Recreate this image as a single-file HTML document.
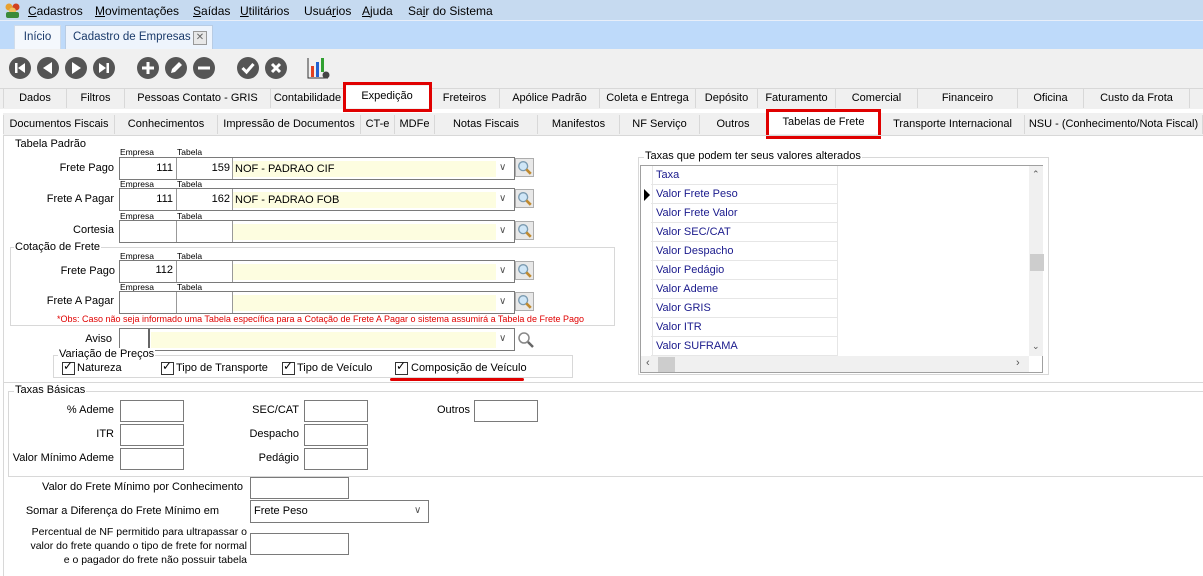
<!DOCTYPE html>
<html><head><meta charset="utf-8"><style>
*{box-sizing:border-box;margin:0;padding:0}
body{width:1203px;height:576px;overflow:hidden;background:#fff;font-family:"Liberation Sans",sans-serif;font-size:11px;color:#000;position:relative}
.a{position:absolute}
.menu{left:0;top:0;width:1203px;height:21px;background:#c6daf0;border-bottom:1px solid #e8eef8}
.menu span{position:absolute;top:4px;font-size:12px}
.strip{left:0;top:21px;width:1203px;height:28px;background:#bedafa}
.tb{left:0;top:49px;width:1203px;height:39px;background:#f0f0f0}
.tabs1{left:0;top:88px;width:1203px;height:21px;background:#f0f0f0;border-top:1px solid #d8d8d8}
.t{position:absolute;height:19px;border-right:1px solid #d8d8d8;text-align:center;line-height:19px;font-size:11px;background:#f0f0f0;white-space:nowrap}
.tabs2{left:3px;top:113px;width:1200px;height:22px;background:#f0f0f0}
.circ{position:absolute;top:8px;width:22px;height:22px;border-radius:50%;background:#555}
.circ svg{position:absolute;left:0;top:0}
.lbl{position:absolute;text-align:right;font-size:11px}
.sm{position:absolute;font-size:8.5px;line-height:9px}
.box{position:absolute;border:1px solid #7a7a7a;background:#fff}
.yl{position:absolute;background:#fdfde0}
.grp{position:absolute;border:1px solid #d8d8d8}
.gt{position:absolute;background:#fff;font-size:11px;padding:0 1px}
.mag{position:absolute;width:19px;height:19px;border:1px solid #adadad;background:#e8e8e8}
.chk{position:absolute;width:13px;height:13px;border:1px solid #333;background:#fff}
.row{position:absolute;left:651px;width:187px;height:19px;border-bottom:1px solid #e6e6e6;border-right:1px solid #e6e6e6;color:#1a1a8c;font-size:11px;line-height:19px;padding-left:5px}
.dd{position:absolute;font-size:10px;color:#555}
</style></head><body>
<svg width="0" height="0" style="position:absolute"><defs><symbol id="mg" viewBox="0 0 19 19"><circle cx="8" cy="8" r="5" fill="#cfe6f7" stroke="#7a9ab0" stroke-width="1.5"/><path d="M11.5 11.5l5 5" stroke="#c08a30" stroke-width="3"/></symbol></defs></svg>
<div class="a menu">
<svg class="a" style="left:4px;top:2px" width="17" height="17"><circle cx="5" cy="5" r="3.5" fill="#e8a030"/><circle cx="12" cy="5" r="3.5" fill="#d04020"/><circle cx="8.5" cy="9" r="3.5" fill="#f0c060"/><rect x="2" y="10" width="13" height="6" rx="2" fill="#3a8a3a"/></svg>
<span style="left:28px"><u>C</u>adastros</span><span style="left:95px"><u>M</u>ovimentações</span><span style="left:193px"><u>S</u>aídas</span><span style="left:240px"><u>U</u>tilitários</span><span style="left:304px">Usuá<u>r</u>ios</span><span style="left:362px"><u>A</u>juda</span><span style="left:408px">Sa<u>i</u>r do Sistema</span>
</div>
<div class="a strip">
<div class="a" style="left:14px;top:4px;width:47px;height:24px;background:#f4f8fd;border:1px solid #d0dcea;border-bottom:none;font-size:11.5px;line-height:22px;text-align:center;color:#1a3a6a">Início</div>
<div class="a" style="left:65px;top:4px;width:148px;height:24px;background:#eef4fc;border:1px solid #b8cce4;border-bottom:none;font-size:11.5px;line-height:22px;padding-left:7px;color:#1a3a6a">Cadastro de Empresas</div>
<div class="a" style="left:193px;top:10px;width:14px;height:14px;border:1px solid #999;background:#e8e8e8;font-size:10px;line-height:12px;text-align:center;color:#666">✕</div>
</div>
<div class="a tb">
<div class="circ" style="left:9px"><svg width="22" height="22"><rect x="6" y="6" width="2.5" height="10" fill="#fff"/><path d="M16 6v10l-7-5z" fill="#fff"/></svg></div>
<div class="circ" style="left:37px"><svg width="22" height="22"><path d="M15 5v12l-9-6z" fill="#fff"/></svg></div>
<div class="circ" style="left:65px"><svg width="22" height="22"><path d="M7 5v12l9-6z" fill="#fff"/></svg></div>
<div class="circ" style="left:93px"><svg width="22" height="22"><path d="M6 6v10l7-5z" fill="#fff"/><rect x="13.5" y="6" width="2.5" height="10" fill="#fff"/></svg></div>
<div class="circ" style="left:137px"><svg width="22" height="22"><rect x="5" y="9.5" width="12" height="3" fill="#fff"/><rect x="9.5" y="5" width="3" height="12" fill="#fff"/></svg></div>
<div class="circ" style="left:165px"><svg width="22" height="22"><path d="M6 16l1-4 7-7 3 3-7 7z" fill="#fff"/></svg></div>
<div class="circ" style="left:193px"><svg width="22" height="22"><rect x="5" y="9.5" width="12" height="3" fill="#fff"/></svg></div>
<div class="circ" style="left:237px"><svg width="22" height="22"><path d="M5.5 11l4 4 7-8" stroke="#fff" stroke-width="3" fill="none"/></svg></div>
<div class="circ" style="left:265px"><svg width="22" height="22"><path d="M7 7l8 8M15 7l-8 8" stroke="#fff" stroke-width="3"/></svg></div>
<svg class="a" style="left:307px;top:7px" width="24" height="24"><path d="M1 2v20h20" stroke="#333" fill="none"/><rect x="4" y="10" width="3" height="11" fill="#e04020"/><rect x="9" y="6" width="3" height="15" fill="#2060d0"/><rect x="14" y="2" width="3" height="14" fill="#30a030"/><circle cx="19" cy="19" r="3.5" fill="#444"/></svg>
</div>
<div class="a tabs1">
<div class="t" style="left:3px;width:64px;border-left:1px solid #d8d8d8">Dados</div>
<div class="t" style="left:67px;width:58px">Filtros</div>
<div class="t" style="left:125px;width:146px">Pessoas Contato - GRIS</div>
<div class="t" style="left:271px;width:74px">Contabilidade</div>
<div class="t" style="left:345px;width:85px;background:#fff;top:-3px;height:22px;line-height:20px">Expedição</div>
<div class="t" style="left:430px;width:70px">Freteiros</div>
<div class="t" style="left:500px;width:100px">Apólice Padrão</div>
<div class="t" style="left:600px;width:96px">Coleta e Entrega</div>
<div class="t" style="left:696px;width:62px">Depósito</div>
<div class="t" style="left:758px;width:78px">Faturamento</div>
<div class="t" style="left:836px;width:82px">Comercial</div>
<div class="t" style="left:918px;width:100px">Financeiro</div>
<div class="t" style="left:1018px;width:66px">Oficina</div>
<div class="t" style="left:1084px;width:106px">Custo da Frota</div>
</div>
<div class="a" style="left:343px;top:82px;width:89px;height:30px;border:3px solid #e00000"></div>
<div class="a tabs2">
<div class="t" style="left:0;width:112px;top:2px;border-left:1px solid #d8d8d8">Documentos Fiscais</div>
<div class="t" style="left:112px;width:103px;top:2px">Conhecimentos</div>
<div class="t" style="left:215px;width:143px;top:2px">Impressão de Documentos</div>
<div class="t" style="left:358px;width:34px;top:2px">CT-e</div>
<div class="t" style="left:392px;width:40px;top:2px">MDFe</div>
<div class="t" style="left:432px;width:103px;top:2px">Notas Fiscais</div>
<div class="t" style="left:535px;width:82px;top:2px">Manifestos</div>
<div class="t" style="left:617px;width:80px;top:2px">NF Serviço</div>
<div class="t" style="left:697px;width:67px;top:2px">Outros</div>
<div class="t" style="left:764px;width:114px;top:-1px;height:22px;background:#fff;line-height:20px">Tabelas de Frete</div>
<div class="t" style="left:878px;width:144px;top:2px">Transporte Internacional</div>
<div class="t" style="left:1022px;width:178px;top:2px">NSU - (Conhecimento/Nota Fiscal)</div>
</div>
<div class="a" style="left:766px;top:109px;width:115px;height:30px;border:3px solid #e00000"></div>
<div class="a" style="left:3px;top:135px;width:1200px;height:1px;background:#d8d8d8"></div>
<div class="a" style="left:3px;top:135px;width:1px;height:441px;background:#d8d8d8"></div>

<div class="gt" style="left:14px;top:138px">Tabela Padrão</div>
<div class="sm" style="left:120px;top:148px">Empresa</div><div class="sm" style="left:177px;top:148px">Tabela</div>
<div class="lbl" style="left:20px;width:94px;top:162px">Frete Pago</div>
<div class="box" style="left:119px;top:157px;width:396px;height:23px"></div>
<div class="a" style="left:176px;top:158px;width:1px;height:21px;background:#999"></div><div class="a" style="left:232px;top:158px;width:1px;height:21px;background:#999"></div>
<div class="a" style="left:120px;top:162px;width:53px;text-align:right">111</div><div class="a" style="left:177px;top:162px;width:53px;text-align:right">159</div>
<div class="yl" style="left:233px;top:161px;width:263px;height:16px;padding-left:2px;line-height:16px">NOF - PADRAO CIF</div>
<div class="dd" style="left:499px;top:162px">∨</div>
<svg class="mag" style="left:515px;top:158px"><use href="#mg"/></svg>

<div class="sm" style="left:120px;top:180px">Empresa</div><div class="sm" style="left:177px;top:180px">Tabela</div>
<div class="lbl" style="left:20px;width:94px;top:193px">Frete A Pagar</div>
<div class="box" style="left:119px;top:188px;width:396px;height:23px"></div>
<div class="a" style="left:176px;top:189px;width:1px;height:21px;background:#999"></div><div class="a" style="left:232px;top:189px;width:1px;height:21px;background:#999"></div>
<div class="a" style="left:120px;top:193px;width:53px;text-align:right">111</div><div class="a" style="left:177px;top:193px;width:53px;text-align:right">162</div>
<div class="yl" style="left:233px;top:192px;width:263px;height:16px;padding-left:2px;line-height:16px">NOF - PADRAO FOB</div>
<div class="dd" style="left:499px;top:193px">∨</div>
<svg class="mag" style="left:515px;top:189px"><use href="#mg"/></svg>

<div class="sm" style="left:120px;top:212px">Empresa</div><div class="sm" style="left:177px;top:212px">Tabela</div>
<div class="lbl" style="left:20px;width:94px;top:224px">Cortesia</div>
<div class="box" style="left:119px;top:220px;width:396px;height:23px"></div>
<div class="a" style="left:176px;top:221px;width:1px;height:21px;background:#999"></div><div class="a" style="left:232px;top:221px;width:1px;height:21px;background:#999"></div>
<div class="yl" style="left:233px;top:224px;width:263px;height:16px"></div>
<div class="dd" style="left:499px;top:225px">∨</div>
<svg class="mag" style="left:515px;top:221px"><use href="#mg"/></svg>

<div class="grp" style="left:10px;top:247px;width:605px;height:79px"></div>
<div class="gt" style="left:14px;top:241px">Cotação de Frete</div>
<div class="sm" style="left:120px;top:252px">Empresa</div><div class="sm" style="left:177px;top:252px">Tabela</div>
<div class="lbl" style="left:20px;width:95px;top:265px">Frete Pago</div>
<div class="box" style="left:119px;top:260px;width:396px;height:23px"></div>
<div class="a" style="left:176px;top:261px;width:1px;height:21px;background:#999"></div><div class="a" style="left:232px;top:261px;width:1px;height:21px;background:#999"></div>
<div class="a" style="left:120px;top:264px;width:53px;text-align:right">112</div>
<div class="yl" style="left:233px;top:264px;width:263px;height:16px"></div>
<div class="dd" style="left:499px;top:265px">∨</div>
<svg class="mag" style="left:515px;top:261px"><use href="#mg"/></svg>
<div class="sm" style="left:120px;top:283px">Empresa</div><div class="sm" style="left:177px;top:283px">Tabela</div>
<div class="lbl" style="left:20px;width:94px;top:295px">Frete A Pagar</div>
<div class="box" style="left:119px;top:291px;width:396px;height:23px"></div>
<div class="a" style="left:176px;top:292px;width:1px;height:21px;background:#999"></div><div class="a" style="left:232px;top:292px;width:1px;height:21px;background:#999"></div>
<div class="yl" style="left:233px;top:295px;width:263px;height:16px"></div>
<div class="dd" style="left:499px;top:296px">∨</div>
<svg class="mag" style="left:515px;top:292px"><use href="#mg"/></svg>
<div class="a" style="left:57px;top:314px;font-size:9px;color:#e00000;white-space:nowrap">*Obs: Caso não seja informado uma Tabela específica para a Cotação de Frete A Pagar o sistema assumirá a Tabela de Frete Pago</div>

<div class="lbl" style="left:20px;width:92px;top:333px">Aviso</div>
<div class="box" style="left:119px;top:328px;width:396px;height:23px"></div>
<div class="a" style="left:148px;top:329px;width:2px;height:21px;background:#666"></div>
<div class="yl" style="left:151px;top:332px;width:345px;height:16px"></div>
<div class="dd" style="left:499px;top:333px">∨</div>
<svg class="a" style="left:517px;top:331px" width="18" height="18"><circle cx="7" cy="7" r="5" fill="none" stroke="#888" stroke-width="1.5"/><path d="M11 11l5 5" stroke="#666" stroke-width="2.5"/></svg>

<div class="grp" style="left:53px;top:355px;width:520px;height:23px"></div>
<div class="gt" style="left:58px;top:348px">Variação de Preços</div>
<div class="chk" style="left:62px;top:362px"></div><div class="a" style="left:63px;top:359px;font-size:12px">✓</div><div class="a" style="left:77px;top:362px">Natureza</div>
<div class="chk" style="left:161px;top:362px"></div><div class="a" style="left:162px;top:359px;font-size:12px">✓</div><div class="a" style="left:176px;top:362px">Tipo de Transporte</div>
<div class="chk" style="left:282px;top:362px"></div><div class="a" style="left:283px;top:359px;font-size:12px">✓</div><div class="a" style="left:297px;top:362px">Tipo de Veículo</div>
<div class="chk" style="left:395px;top:362px"></div><div class="a" style="left:396px;top:359px;font-size:12px">✓</div><div class="a" style="left:411px;top:362px">Composição de Veículo</div>
<div class="a" style="left:390px;top:378px;width:134px;height:3px;background:#e00000;border-radius:2px"></div>

<div class="grp" style="left:638px;top:157px;width:411px;height:218px"></div>
<div class="gt" style="left:644px;top:150px">Taxas que podem ter seus valores alterados</div>
<div class="a" style="left:640px;top:165px;width:403px;height:208px;border:1px solid #a0a0a0;background:#fff"></div>
<div class="a" style="left:641px;top:166px;width:12px;height:190px;border-right:1px solid #e6e6e6"></div>
<div class="row" style="top:166px">Taxa</div>
<div class="row" style="top:185px">Valor Frete Peso</div>
<div class="a" style="left:644px;top:189px;width:0;height:0;border-left:6px solid #000;border-top:6px solid transparent;border-bottom:6px solid transparent"></div>
<div class="row" style="top:204px">Valor Frete Valor</div>
<div class="row" style="top:223px">Valor SEC/CAT</div>
<div class="row" style="top:242px">Valor Despacho</div>
<div class="row" style="top:261px">Valor Pedágio</div>
<div class="row" style="top:280px">Valor Ademe</div>
<div class="row" style="top:299px">Valor GRIS</div>
<div class="row" style="top:318px">Valor ITR</div>
<div class="row" style="top:337px">Valor SUFRAMA</div>
<div class="a" style="left:1029px;top:166px;width:14px;height:190px;background:#f0f0f0"></div>
<div class="a" style="left:1030px;top:254px;width:14px;height:17px;background:#cdcdcd"></div>
<div class="a" style="left:1032px;top:169px;font-size:9px;color:#555">⌃</div>
<div class="a" style="left:1032px;top:341px;font-size:9px;color:#555">⌄</div>
<div class="a" style="left:641px;top:356px;width:388px;height:16px;background:#f0f0f0"></div>
<div class="a" style="left:658px;top:357px;width:17px;height:15px;background:#cdcdcd"></div>
<div class="a" style="left:646px;top:357px;font-size:11px;color:#555">‹</div>
<div class="a" style="left:1016px;top:357px;font-size:11px;color:#555">›</div>

<div class="a" style="left:3px;top:382px;width:1200px;height:1px;background:#d8d8d8"></div>
<div class="grp" style="left:8px;top:391px;width:1195px;height:86px;border-right:none"></div>
<div class="gt" style="left:14px;top:384px">Taxas Básicas</div>
<div class="lbl" style="left:10px;width:104px;top:404px">% Ademe</div><div class="box" style="left:120px;top:400px;width:64px;height:22px"></div>
<div class="lbl" style="left:10px;width:104px;top:428px">ITR</div><div class="box" style="left:120px;top:424px;width:64px;height:22px"></div>
<div class="lbl" style="left:0px;width:114px;top:452px;white-space:nowrap">Valor Mínimo Ademe</div><div class="box" style="left:120px;top:448px;width:64px;height:22px"></div>
<div class="lbl" style="left:200px;width:99px;top:404px">SEC/CAT</div><div class="box" style="left:304px;top:400px;width:64px;height:22px"></div>
<div class="lbl" style="left:200px;width:99px;top:428px">Despacho</div><div class="box" style="left:304px;top:424px;width:64px;height:22px"></div>
<div class="lbl" style="left:200px;width:99px;top:452px">Pedágio</div><div class="box" style="left:304px;top:448px;width:64px;height:22px"></div>
<div class="lbl" style="left:400px;width:70px;top:404px">Outros</div><div class="box" style="left:474px;top:400px;width:64px;height:22px"></div>

<div class="lbl" style="left:0px;width:243px;top:481px;white-space:nowrap">Valor do Frete Mínimo por Conhecimento</div><div class="box" style="left:250px;top:477px;width:99px;height:22px"></div>
<div class="lbl" style="left:0px;width:219px;top:505px;white-space:nowrap">Somar a Diferença do Frete Mínimo em</div>
<div class="box" style="left:250px;top:500px;width:179px;height:23px;padding:4px 3px">Frete Peso</div>
<div class="dd" style="left:414px;top:505px">∨</div>
<div class="lbl" style="left:0px;width:247px;top:525px;line-height:14px;font-size:10.5px">Percentual de NF permitido para ultrapassar o<br>valor do frete quando o tipo de frete for normal<br>e o pagador do frete não possuir tabela</div>
<div class="box" style="left:250px;top:533px;width:99px;height:22px"></div>
</body></html>
